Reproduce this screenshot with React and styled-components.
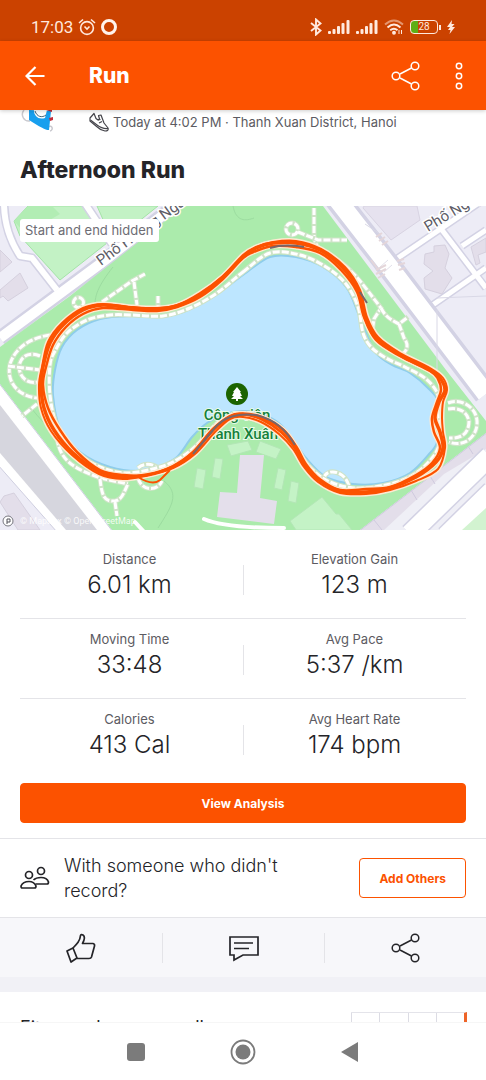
import React from "react";
import styled, { createGlobalStyle } from "styled-components";

const orange = "#fc5200";
const ink = "#242428";

const stats = [
  [
    { label: "Distance", value: "6.01 km" },
    { label: "Elevation Gain", value: "123 m" },
  ],
  [
    { label: "Moving Time", value: "33:48" },
    { label: "Avg Pace", value: "5:37 /km" },
  ],
  [
    { label: "Calories", value: "413 Cal" },
    { label: "Avg Heart Rate", value: "174 bpm" },
  ],
];

// Map geometry, in map units
const lake = [
  [243, 69], [213, 91], [183, 106], [160, 111], [130, 110], [100, 113], [77, 124], [62, 141], [55, 164],
  [53, 189], [60, 222], [80, 246], [110, 261], [140, 265], [160, 260], [177, 251], [192, 231], [207, 217],
  [225, 208], [243, 205], [262, 208], [280, 218], [293, 233], [306, 252], [326, 271], [353, 278], [383, 277],
  [410, 267], [430, 247], [437, 236], [434, 219], [440, 199], [430, 184], [410, 167], [392, 159], [376, 147],
  [366, 127], [358, 107], [346, 81], [323, 61], [296, 51], [270, 51],
];

const promenade = [
  [243, 66], [270, 47], [300, 49], [326, 61], [346, 78], [358, 101], [363, 127], [371, 141], [386, 152],
  [405, 161], [426, 173], [438, 189], [438, 209], [441, 231], [433, 251], [413, 269], [386, 279], [353, 282],
  [326, 274], [308, 259], [295, 241], [282, 224], [263, 214], [243, 210], [220, 215], [197, 239], [180, 252],
  [160, 261], [127, 267], [100, 261], [77, 246], [57, 219], [50, 189], [50, 159], [55, 145], [67, 127],
  [87, 114], [110, 109], [133, 109], [163, 110], [190, 102], [217, 87],
];

const lapOne = [
  [243, 51], [223, 71], [200, 89], [177, 100], [157, 103], [133, 102], [103, 99], [83, 104], [63, 119],
  [50, 137], [43, 161], [41, 179], [44, 202], [54, 224], [73, 247], [100, 266], [123, 271], [147, 269],
  [173, 261], [193, 247], [213, 224], [230, 211], [243, 208], [263, 212], [283, 224], [296, 241], [306, 259],
  [320, 274], [340, 285], [366, 286], [390, 282], [416, 271], [436, 256], [443, 242], [440, 226], [435, 212],
  [439, 196], [445, 184], [440, 172], [430, 164], [400, 149], [376, 132], [365, 111], [358, 84], [343, 62],
  [320, 44], [296, 37], [273, 37], [256, 42],
];

const lapTwo = [
  [243, 52], [223, 73], [200, 91], [177, 101], [157, 105], [133, 104], [103, 102], [83, 108], [66, 121],
  [53, 139], [46, 161], [43, 179], [48, 202], [60, 224], [77, 246], [100, 264], [123, 269], [147, 269],
  [173, 260], [193, 246], [213, 223], [230, 210], [243, 208], [263, 214], [281, 226], [294, 241], [304, 259],
  [318, 274], [340, 284], [366, 283], [390, 281], [416, 269], [432, 257], [440, 242], [434, 226], [432, 212],
  [437, 196], [441, 184], [438, 173], [430, 165], [400, 150], [376, 134], [364, 111], [357, 86], [341, 64],
  [320, 47], [296, 41], [273, 40], [256, 45],
];

const lapThree = [
  [243, 49], [223, 70], [200, 87], [177, 99], [157, 102], [133, 101], [103, 98], [83, 102], [62, 117],
  [48, 136], [42, 161], [39, 179], [41, 202], [51, 225], [72, 249], [99, 268], [123, 273], [143, 270],
  [173, 262], [195, 248], [215, 226], [230, 213], [243, 211], [261, 216], [279, 228], [293, 243], [304, 261],
  [318, 276], [340, 287], [366, 288], [390, 284], [416, 275], [438, 263], [445, 242], [443, 226], [442, 212],
  [443, 196], [447, 184], [443, 172], [430, 162], [400, 147], [378, 131], [367, 111], [360, 84], [345, 61],
  [321, 43], [296, 35], [273, 36], [256, 41],
];

// Closed Catmull-Rom curve through the points
const smooth = (pts) => {
  const n = pts.length;
  let d = `M${pts[0][0]} ${pts[0][1]}`;
  for (let i = 0; i < n; i++) {
    const a = pts[(i - 1 + n) % n];
    const b = pts[i];
    const c = pts[(i + 1) % n];
    const e = pts[(i + 2) % n];
    d += `C${b[0] + (c[0] - a[0]) / 6} ${b[1] + (c[1] - a[1]) / 6} ${c[0] - (e[0] - b[0]) / 6} ${
      c[1] - (e[1] - b[1]) / 6
    } ${c[0]} ${c[1]}`;
  }
  return d + "Z";
};

const trails = [
  "M102 96L132 75L145 68",
  "M134 76L137 99",
  "M158 90V102",
  "M82 93a5 5 0 1 1 -7 0a5 5 0 0 1 7 0",
  "M50 129C30 132 15 142 10 158C6 176 18 190 37 192",
  "M40 150C28 145 20 151 19 161C20 174 30 178 38 176",
  "M8 160L40 164",
  "M37 198L22 210",
  "M57 232C60 258 80 264 100 272L128 278",
  "M100 273C102 290 104 296 115 295C122 294 124 286 128 278",
  "M115 296L117 310",
  "M138 262C145 256 155 258 160 264M138 272C142 286 158 285 162 275",
  "M314 2V30C316 44 322 46 335 53C352 62 364 80 381 102L374 113L372 126",
  "M286 23a6 6 0 1 0 12 0a6 6 0 1 0 -12 0M298 26L318 34L347 34",
  "M381 102C386 112 392 114 399 118L408 111M399 118L404 132C410 140 407 146 399 150",
  "M448 197C460 192 476 200 477 215C478 230 465 242 449 236",
  "M448 203C460 201 467 206 469 215C469 227 462 233 449 232",
  "M324 272C326 262 345 264 349 280",
];

const RouteMap = () => (
  <MapDrawing viewBox="0 0 486 324" role="img" aria-label="Map of the run around the lake">
    <rect width="486" height="324" fill="#edecf6" />

    {/* streets in the top left corner */}
    <path d="M14 15L28 0H84L107 37L60 74L20 30Z" fill="#c3f2c5" stroke="#a3e3a6" />
    <path d="M28 0L14 15L26 28L60 8L52 0Z" fill="#b2edb4" />
    <path d="M97 0H158L113 36Z" fill="#c3f2c5" stroke="#a3e3a6" />
    <path d="M0 44L12 56L0 66ZM0 84L20 67L28 82L8 95L3 90L0 92Z" fill="#e3deea" stroke="#d5d0de" />
    <g fill="none" strokeLinejoin="round">
      <path d="M4 -4C4 22 12 38 20 50L32 52L57 84M84 -4L112 38" stroke="#d3d2e4" strokeWidth="9" />
      <path d="M0 132L100 58L180 -4" stroke="#d3d2e4" strokeWidth="15" />
      <path d="M4 -4C4 22 12 38 20 50L32 52L57 84M84 -4L112 38" stroke="#fff" strokeWidth="6" />
      <path d="M0 132L100 58L180 -4" stroke="#fff" strokeWidth="10" />
    </g>

    {/* park */}
    <path
      d="M0 141L70 90L184 0H323L446 164L486 215V227L360 324H112L0 178Z"
      fill="#abebac"
    />
    <path d="M113 61C98 80 96 88 95 96M233 0C236 16 246 15 254 12M164 275C180 288 172 300 158 322M30 200C40 215 50 220 58 236" fill="none" stroke="#9cdca0" />

    {/* wide road in the bottom left corner */}
    <path d="M-2 176L113 326H-2Z" fill="#fff" stroke="#cfcfe0" />
    <path d="M0 199L97 324H66L0 247Z" fill="#d6d6de" />
    <path d="M-2 259L57 326H-2Z" fill="#edecf6" stroke="#cfcfe0" />
    <path d="M4 290L14 287L40 324H18L0 296Z" fill="#e3deea" stroke="#d5d0de" />

    {/* avenue and side streets on the right */}
    <g fill="none">
      <path d="M392 56L486 -8M442 24L486 82M424 105L486 62M462 40L486 24" stroke="#d3d2e4" strokeWidth="8" />
      <path d="M392 56L486 -8M442 24L486 82M424 105L486 62M462 40L486 24" stroke="#fff" strokeWidth="5" />
      <path d="M336 -8L388 59L486 188" stroke="#d3d2e4" strokeWidth="25" />
      <path d="M336 -8L388 59L486 188" stroke="#fff" strokeWidth="18" />
      <path d="M437 104V170M437 92L486 90M365 18L380 28" stroke="#d9d8e6" />
      <path d="M380 61L388 54M384 66L392 59" stroke="#e2e0ea" />
      <path d="M376 31L382 27M379 35L385 31M382 39L388 35M371 54L377 62M376 64L386 59M376 68L386 63M378 72L385 68M397 55L404 53M398 59L405 57M399 64L405 62" stroke="#e4d6da" strokeWidth="2" />
    </g>
    <path d="M364 0H417L420 14L391 34L363 2Z" fill="#e6e2ef" stroke="#d8d3e2" />
    <path d="M434 40L445 39L449 48L445 62L452 72L442 88L425 83L424 72L433 65L424 58L425 48L434 46Z" fill="#e3deea" stroke="#d5d0de" />
    <path d="M471 41L486 32V46L478 49L480 57L476 59Z" fill="#e3deea" stroke="#d5d0de" />

    {/* street and pavement in the bottom right corner */}
    <path d="M488 226L358 326H488Z" fill="#e3deea" stroke="#cfcade" />
    <path d="M486 243L444 268L384 324H486Z" fill="#efeff6" />
    <path d="M490 250L410 328M492 285L446 330" stroke="#d3d2e4" strokeWidth="22" />
    <path d="M490 250L410 328M492 285L446 330" stroke="#fff" strokeWidth="19" />
    <path d="M486 302L462 324H486Z" fill="#d2f3d0" />
    <path d="M374 314L382 324M411 284L417 294M430 270L435 278M468 240L473 248" stroke="#cfcade" />

    {/* plaza */}
    <g fill="#c4f3c6" stroke="#b3e6b6">
      <path d="M197 262L206 264L203 283L194 281ZM215 252L223 253L220 273L212 271ZM278 262L286 264L282 284L274 282ZM291 275L299 277L296 297L288 295Z" />
      <path d="M227 239L248 235L252 244L231 250ZM260 235L281 243L276 253L256 246Z" />
      <path d="M290 315L322 291L336 308L339 308L352 324H296Z" />
    </g>
    <path d="M240 249H264L260 292L277 295L274 318L217 311L220 286L237 287Z" fill="#e4dfeb" />
    <path d="M204 313C220 320 250 322 284 322M135 316L146 328" fill="none" stroke="#fff" strokeWidth="4" strokeLinecap="round" />

    <path d={smooth(lake)} fill="#bde6ff" stroke="#8fcdea" strokeWidth="2" />

    {/* footpaths */}
    <g fill="none">
      {[...trails, smooth(promenade)].map((d) => (
        <g key={d}>
          <path d={d} stroke="#cfe3c8" strokeWidth="5" />
          <path d={d} stroke="#fff" strokeWidth="3" strokeDasharray="7 2" />
        </g>
      ))}
    </g>

    <g fontFamily="Roboto, sans-serif" fontSize="15" fill="#5d5c66" stroke="#fff" strokeWidth="3" paintOrder="stroke">
      <text transform="translate(101 60) rotate(-36)">Phố Hoàng Ngân</text>
      <text transform="translate(428 26) rotate(-31)">Phố Nguyễn</text>
    </g>
    <g fontFamily="Roboto, sans-serif" fontSize="15" fontWeight="500" fill="#15803a" stroke="#e9fbea" strokeWidth="2" paintOrder="stroke" textAnchor="middle">
      <text x="237" y="214">Công viên</text>
      <text x="238" y="233">Thanh Xuân</text>
    </g>
    <circle cx="237" cy="188" r="11" fill="#1c6400" />
    <path d="M237 181L241 186H240L242 190H240L243 193H238V195H236V193H231L234 190H232L234 186H233Z" fill="#fff" />

    {/* recorded track, every lap over a pale casing */}
    <g fill="none" strokeLinejoin="round">
      <path d={smooth(lapThree)} stroke="#ffe9d2" strokeWidth="5" />
      <path d={smooth(lapTwo)} stroke="#ffe9d2" strokeWidth="5" />
      <path d={smooth(lapOne)} stroke="#ffe9d2" strokeWidth="6" />
      <path d={smooth(lapThree)} stroke={orange} strokeWidth="2" />
      <path d={smooth(lapTwo)} stroke={orange} strokeWidth="2.500" />
      <path d={smooth(lapOne)} stroke={orange} strokeWidth="3.500" />
      <path d="M138 271C146 276 154 279 160 274L170 264" stroke={orange} strokeWidth="2" />
      <path d="M193 248L213 224C224 210 238 207 256 209C276 214 286 224 295 239M270 42C280 39 292 39 304 41M360 86L367 97" stroke="#77666a" strokeWidth="2" />
    </g>

    <circle cx="8" cy="315" r="5" fill="#fff" stroke="#77777f" />
    <path d="M7 318V313H10V316H7" fill="none" stroke="#55555c" />
    <text x="20" y="318" fontFamily="Roboto, sans-serif" fontSize="9" fill="#fff" fillOpacity="0.85">
      © Mapbox © OpenStreetMap
    </text>
  </MapDrawing>
);

const ShareIcon = () => (
  <svg width="30" height="30" viewBox="0 0 30 30" fill="none" stroke="currentColor" strokeWidth="1.500">
    <circle cx="5" cy="15" r="3.800" />
    <circle cx="24" cy="5" r="3.800" />
    <circle cx="24" cy="25" r="3.800" />
    <path d="M9 13L20.500 7M9 17L20.500 23" />
  </svg>
);

const SignalIcon = () => (
  <svg width="22" height="16" viewBox="0 0 22 16" fill="currentColor">
    <rect x="0" y="12" width="3" height="3" rx="1" />
    <rect x="4.500" y="10" width="3" height="5" rx="1" />
    <rect x="9" y="7" width="3" height="8" rx="1" />
    <rect x="13.500" y="4" width="3" height="11" rx="1" />
    <rect x="18.500" y="1" width="3" height="14" rx="1" />
  </svg>
);

const App = () => {
  return (
    <>
      <GlobalStyle />
      <Screen>
        <StatusBar>
          <StatusGroup>
            <span>17:03</span>
            <svg width="18" height="18" viewBox="0 0 18 18" fill="none" stroke="currentColor" strokeWidth="1.600">
              <circle cx="9" cy="10" r="6.400" />
              <path d="M6.500 8.500L9 11L11.500 8.500M1 5L5 1.500M17 5L13 1.500" />
            </svg>
            <Ring />
          </StatusGroup>
          <StatusGroup $wide>
            <svg width="12" height="18" viewBox="0 0 12 18" fill="none" stroke="currentColor" strokeWidth="1.900">
              <path d="M1 5L10.500 12.500L6 16.500V1.500L10.500 5.500L1 13" />
            </svg>
            <SignalIcon />
            <SignalIcon />
            <svg width="20" height="16" viewBox="0 0 20 16" fill="none" stroke="currentColor" strokeWidth="1.900">
              <path d="M1 5.500Q10 -2.500 19 5.500" opacity="0.5" />
              <path d="M3.500 8.500Q10 2.500 16.500 8.500M6.200 11.300Q10 8 13.500 11.300" />
              <circle cx="10" cy="13.800" r="1" />
              <path d="M15 11V15M17.500 11V15" strokeWidth="1" />
            </svg>
            <BatteryWrap>
              <Battery>28</Battery>
              <Nub />
            </BatteryWrap>
            <svg width="8" height="14" viewBox="0 0 8 14" fill="currentColor">
              <path d="M5 0L0 7H3L1 10H3.500L2.500 14L8 7H5L7.500 4H4.500Z" />
            </svg>
          </StatusGroup>
        </StatusBar>

        <AppBar>
          <IconButton aria-label="Back">
            <svg width="20" height="20" viewBox="0 0 20 20" fill="none" stroke="currentColor" strokeWidth="2.200">
              <path d="M19.500 10H2M10.500 1L1.500 10L10.500 19" />
            </svg>
          </IconButton>
          <BarTitle>Run</BarTitle>
          <IconButton aria-label="Share">
            <ShareIcon />
          </IconButton>
          <IconButton aria-label="More options">
            <svg width="8" height="28" viewBox="0 0 8 28" fill="none" stroke="currentColor" strokeWidth="1.500">
              <circle cx="4" cy="4" r="2.700" />
              <circle cx="4" cy="14" r="2.700" />
              <circle cx="4" cy="24" r="2.700" />
            </svg>
          </IconButton>
        </AppBar>

        <Content>
          <AthleteRow>
            <svg width="34" height="24" viewBox="0 0 34 24">
              <path d="M4 0C0 5 4 12 10 11M28 17C32 14 34 20 30 21" fill="none" stroke="#c9c9cf" strokeWidth="1.500" />
              <path d="M9 0L31 1L29 20Q26 21 9 10Z" fill="#189fee" />
              <path d="M14 0C14 6 18 10 25 8L27 0Z" fill="#fff" />
              <path d="M15 1C17 7 22 8 26 5" fill="none" stroke="#3f6478" />
              <path d="M26 0H32V2ZM29 8L33 7V10L30 11Z" fill="#c22c38" />
            </svg>
            <svg width="20" height="20" viewBox="0 0 20 20" fill="none" stroke="#44444a" strokeWidth="1.200" strokeLinejoin="round">
              <path d="M1 6L5 1.500L7 6.500L9 8L10.500 7L9.500 3.500L12 3L15 11L19 16Q20 19 16 19Q11 18 7 14L1 9Z" />
              <path d="M1.500 8L8 13Q13 17 19 16.500M9 8L11.500 7.500M10 11L13 9.500" />
            </svg>
            <span>Today at 4:02 PM · Thanh Xuan District, Hanoi</span>
          </AthleteRow>
          <Title>Afternoon Run</Title>

          <MapBox>
            <RouteMap />
            <MapChip>Start and end hidden</MapChip>
          </MapBox>

          <Stats>
            {stats.map((row) => (
              <StatRow key={row[0].label}>
                {row.map(({ label, value }) => (
                  <Stat key={label}>
                    <dt>{label}</dt>
                    <dd>{value}</dd>
                  </Stat>
                ))}
              </StatRow>
            ))}
          </Stats>

          <ButtonWrap>
            <Button $filled>View Analysis</Button>
          </ButtonWrap>

          <Companions>
            <svg width="30" height="24" viewBox="0 0 30 24" fill="none" stroke={ink} strokeWidth="1.700">
              <circle cx="9" cy="9" r="3.500" />
              <circle cx="21" cy="5" r="3.500" />
              <path d="M2.500 22Q1 22 1 20Q3 15.500 9 15.500Q14 15.500 16 20Q16 22 14.500 22Z" />
              <path d="M13.500 14Q16 11.500 21 11.500Q27 11.500 28.500 16Q28.500 18 27 18H15.500" />
            </svg>
            <p>With someone who didn't record?</p>
            <Button>Add Others</Button>
          </Companions>

          <Actions>
            <Action aria-label="Give kudos">
              <svg width="30" height="30" viewBox="0 0 30 30" fill="none" stroke="currentColor" strokeWidth="1.700" strokeLinejoin="round">
                <path d="M1 18L7 15L11 25L5 29Z" />
                <path d="M7 15C11 11 14 8 14.500 2.500Q15 1 17 2Q20 4 16.500 10.500H27Q29 11 28.500 13L25.500 24Q25 25.500 23 25.500H11" />
              </svg>
            </Action>
            <Action aria-label="Comment">
              <svg width="30" height="30" viewBox="0 0 30 30" fill="none" stroke="currentColor" strokeWidth="1.700">
                <path d="M1 4H29V22H14L5 27V22H1Z" />
                <path d="M5 10H24M5 15.500H20" />
              </svg>
            </Action>
            <Action aria-label="Share activity">
              <ShareIcon />
            </Action>
          </Actions>

          <Fitness>
            <h2>Fitness change usually</h2>
            <Chart>
              <i />
              <i />
              <i />
              <i />
            </Chart>
          </Fitness>
        </Content>

        <NavBar>
          <IconButton aria-label="Recent apps">
            <svg width="20" height="20" viewBox="0 0 20 20">
              <rect x="1" y="1" width="18" height="18" rx="3" fill="#7b7b7b" />
            </svg>
          </IconButton>
          <IconButton aria-label="Home">
            <svg width="26" height="26" viewBox="0 0 26 26">
              <circle cx="13" cy="13" r="11.500" fill="none" stroke="#7b7b7b" strokeWidth="1.800" />
              <circle cx="13" cy="13" r="7.500" fill="#7b7b7b" />
            </svg>
          </IconButton>
          <IconButton aria-label="Go back">
            <svg width="20" height="22" viewBox="0 0 20 22">
              <path d="M18 1V21L1 11Z" fill="#7b7b7b" />
            </svg>
          </IconButton>
        </NavBar>
      </Screen>
    </>
  );
};

const GlobalStyle = createGlobalStyle`
  * {
    box-sizing: border-box;
  }

  body {
    margin: 0;
    background: #fff;
    color: ${ink};
    font-family: Inter, "Liberation Sans", sans-serif;
  }

  h1, h2, p, dl, dt, dd {
    margin: 0;
  }

  button {
    font-family: inherit;
    cursor: pointer;
  }

  svg {
    display: block;
    flex-shrink: 0;
  }
`;

const Screen = styled.div`
  height: 100vh;
  display: flex;
  flex-direction: column;
  overflow: hidden;
`;

const StatusBar = styled.header`
  display: flex;
  justify-content: space-between;
  padding: 12px 31px 0;
  height: 41px;
  flex-shrink: 0;
  background: #cb4200;
  color: #ffe9de;
  font-family: Roboto, sans-serif;
  font-size: 17px;
`;

const StatusGroup = styled.div`
  display: flex;
  align-items: center;
  height: 30px;
  gap: ${({ $wide }) => ($wide ? "6px" : "5px")};
`;

const Ring = styled.span`
  width: 16px;
  height: 16px;
  border: 3px solid #fff3ec;
  border-radius: 50%;
`;

const BatteryWrap = styled.span`
  display: flex;
  align-items: center;
  gap: 1px;
`;

const Battery = styled.span`
  width: 28px;
  height: 14px;
  border: 1px solid #ffe9de;
  border-radius: 4px;
  background: linear-gradient(90deg, #5fae14 28%, transparent 28%);
  font-size: 10px;
  line-height: 12px;
  text-align: center;
`;

const Nub = styled.span`
  width: 2px;
  height: 5px;
  background: #ffe9de;
`;

const AppBar = styled.div`
  display: flex;
  align-items: center;
  gap: 34px;
  height: 69px;
  padding: 0 23px 0 25px;
  flex-shrink: 0;
  background: ${orange};
  color: #fff;
  box-shadow: 0 1px 4px rgba(0, 0, 0, 0.2);
  z-index: 1;
`;

const IconButton = styled.button`
  padding: 0;
  border: none;
  background: none;
  color: inherit;
`;

const BarTitle = styled.h1`
  flex: 1;
  padding-left: 10px;
  font-size: 21px;
  font-weight: 800;
`;

const Content = styled.main`
  flex: 1;
  min-height: 0;
  overflow: hidden;
`;

const AthleteRow = styled.div`
  display: flex;
  align-items: center;
  height: 24px;
  padding: 0 20px;
  font-size: 13px;
  color: #5c5b62;
  white-space: nowrap;

  svg + svg {
    margin: 0 4px 0 35px;
  }
`;

const Title = styled.h2`
  padding: 0 20px;
  font-size: 23px;
  font-weight: 800;
  line-height: 72px;
`;

const MapBox = styled.section`
  position: relative;
`;

const MapDrawing = styled.svg`
  width: 100%;
  height: auto;
`;

const MapChip = styled.span`
  position: absolute;
  top: 13px;
  left: 20px;
  padding: 0 6px 0 5px;
  border-radius: 3px;
  background: #fff;
  color: #6d6c74;
  font-size: 13px;
  line-height: 23px;
`;

const Stats = styled.div`
  padding: 9px 20px 0;
`;

const StatRow = styled.dl`
  display: grid;
  grid-template-columns: 1fr 1fr;
  padding: 10px 0 19px;
  text-align: center;

  & + & {
    border-top: 1px solid #e4e4e8;
  }
`;

const Stat = styled.div`
  dt {
    font-size: 13px;
    line-height: 20px;
    color: #5c5b62;
  }

  dd {
    font-size: 24px;
    font-weight: 300;
    line-height: 31px;
    margin-bottom: -1px;
  }

  &:first-child {
    padding-right: 4px;
  }

  & + & {
    background: linear-gradient(#e4e4e8, #e4e4e8) left 16px / 1px 30px no-repeat;
  }
`;

const ButtonWrap = styled.div`
  display: flex;
  padding: 5px 20px 15px;

  button {
    flex: 1;
  }
`;

const Button = styled.button`
  height: 40px;
  padding: 0 19px;
  border: 1px solid ${orange};
  border-radius: 4px;
  background: ${({ $filled }) => ($filled ? orange : "#fff")};
  color: ${({ $filled }) => ($filled ? "#fff" : orange)};
  font-size: 12px;
  font-weight: 700;
  white-space: nowrap;
`;

const Companions = styled.section`
  display: flex;
  align-items: center;
  gap: 14px;
  height: 79px;
  padding: 0 20px;
  border-top: 1px solid #e4e4e8;

  p {
    flex: 1;
    padding-right: 60px;
    font-size: 18px;
    font-weight: 300;
    line-height: 25px;
  }
`;

const Actions = styled.div`
  display: grid;
  grid-template-columns: repeat(3, 1fr);
  align-items: center;
  height: 60px;
  border-top: 1px solid #e4e4e8;
  background: #f7f7fa;
`;

const Action = styled.button`
  display: flex;
  align-items: center;
  justify-content: center;
  height: 30px;
  padding: 0;
  border: none;
  background: none;
  color: ${ink};

  & + & {
    border-left: 1px solid #e4e4e8;
  }
`;

const Fitness = styled.section`
  display: flex;
  justify-content: space-between;
  padding: 20px 19px 20px 20px;
  border-top: 15px solid #f1f1f6;

  h2 {
    font-size: 18px;
    font-weight: 400;
    line-height: 32px;
  }
`;

const Chart = styled.div`
  display: grid;
  grid-template-columns: repeat(4, 1fr);
  width: 116px;
  height: 80px;
  border-top: 1px solid #e4e4ea;
  border-right: 3px solid #ee6428;

  i {
    border-left: 1px solid #dcdce4;
  }
`;

const NavBar = styled.nav`
  display: flex;
  align-items: center;
  justify-content: center;
  gap: 84px;
  height: 58px;
  flex-shrink: 0;
  background: #fff;
  border-top: 1px solid #f6f6f6;
`;

export default App;
